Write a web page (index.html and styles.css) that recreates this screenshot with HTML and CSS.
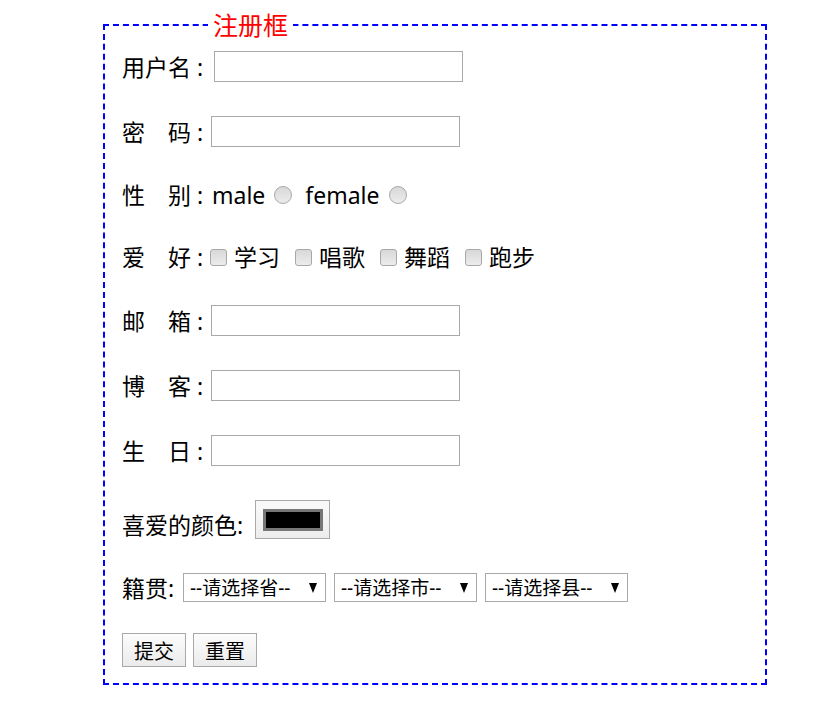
FILE: index.html
```html
<!DOCTYPE html>
<html lang="zh-CN">
<head>
<meta charset="utf-8">
<title>注册</title>
<link rel="stylesheet" href="styles.css">
</head>
<body>
<form class="form">
  <fieldset class="box">
    <legend class="legend">注册框</legend>
    <div class="row first">
      <span class="lbl lbl-wide">用户名 :</span>
      <input class="field" type="text">
    </div>
    <div class="row">
      <span class="lbl">密&emsp;码 :</span>
      <input class="field" type="password">
    </div>
    <div class="row text-row">
      <span class="lbl lbl-sex">性&emsp;别 :</span>
      <span class="opt-text">male</span>
      <input class="radio" type="radio" name="sex">
      <span class="opt-text">female</span>
      <input class="radio" type="radio" name="sex">
    </div>
    <div class="row text-row">
      <span class="lbl lbl-check">爱&emsp;好 :</span>
      <input class="check" type="checkbox"><span class="opt-text">学习</span>
      <input class="check" type="checkbox"><span class="opt-text">唱歌</span>
      <input class="check" type="checkbox"><span class="opt-text">舞蹈</span>
      <input class="check" type="checkbox"><span class="opt-text">跑步</span>
    </div>
    <div class="row">
      <span class="lbl">邮&emsp;箱 :</span>
      <input class="field" type="email">
    </div>
    <div class="row">
      <span class="lbl">博&emsp;客 :</span>
      <input class="field" type="url">
    </div>
    <div class="row">
      <span class="lbl">生&emsp;日 :</span>
      <input class="field" type="text">
    </div>
    <div class="row color-row">
      <span class="lbl lbl-color">喜爱的颜色:</span>
      <input class="color" type="color" value="#000000">
    </div>
    <div class="row place-row">
      <span class="lbl lbl-place">籍贯:</span>
      <span class="sel-wrap">
        <select class="sel"><option>--请选择省--</option></select>
      </span>
      <span class="sel-wrap">
        <select class="sel"><option>--请选择市--</option></select>
      </span>
      <span class="sel-wrap">
        <select class="sel"><option>--请选择县--</option></select>
      </span>
    </div>
    <div class="row actions">
      <button class="btn" type="submit">提交</button>
      <button class="btn" type="reset">重置</button>
    </div>
  </fieldset>
</form>
</body>
</html>
```

FILE: styles.css
```css
html, body {
  margin: 0;
  padding: 0;
  background: #fff;
}

body {
  font-family: "Noto Sans", "Noto Sans CJK SC", sans-serif;
  font-size: 23px;
  color: #000;
}

.form {
  margin: 0;
}

.box {
  margin: 12px 0 0 103px;
  width: 664px;
  box-sizing: border-box;
  border: 2px dashed #0000ff;
  padding: 0 17px 16px 17px;
  min-inline-size: 0;
}

.legend {
  margin-left: 86px;
  padding: 0 5px;
  font-size: 25px;
  line-height: 26px;
  color: #ff0000;
}

.row {
  display: flex;
  align-items: center;
  margin-top: 34px;
  height: 31px;
  white-space: nowrap;
}

.row.first {
  margin-top: 13px;
}

.text-row {
  height: 28px;
}

.color-row {
  height: 39px;
  align-items: flex-end;
}

.place-row {
  height: 29px;
}

.actions {
  height: 34px;
  margin-top: 31px;
}

.lbl {
  display: inline-block;
  width: 89px;
  line-height: 28px;
  flex: none;
}

.lbl-wide { width: 92px; }
.lbl-sex { width: 90px; }
.lbl-check { width: 88px; }
.lbl-color { width: 133px; }
.lbl-place { width: 61px; }

.field {
  width: 249px;
  height: 31px;
  box-sizing: border-box;
  margin: 0;
  padding: 0 4px;
  border: 1px solid #a9a9a9;
  border-radius: 0;
  background: #fff;
  font: inherit;
  font-size: 18px;
}

.opt-text {
  line-height: 28px;
}

.radio {
  appearance: none;
  -webkit-appearance: none;
  width: 18px;
  height: 18px;
  margin: 0 0 0 9px;
  border: 1px solid #a8a8a8;
  border-radius: 50%;
  background: linear-gradient(#d8d8d8, #ececec);
  box-sizing: border-box;
  flex: none;
}

.radio + .opt-text { margin-left: 13px; }

.check {
  appearance: none;
  -webkit-appearance: none;
  width: 17px;
  height: 17px;
  margin: 0 7px 0 0;
  border: 1px solid #a8a8a8;
  border-radius: 3px;
  background: linear-gradient(#d8d8d8, #ececec);
  box-sizing: border-box;
  flex: none;
}

.opt-text + .check { margin-left: 15px; }

.color {
  -webkit-appearance: none;
  appearance: none;
  width: 75px;
  height: 39px;
  box-sizing: border-box;
  margin: 0;
  padding: 0;
  border: 1px solid #a9a9a9;
  background: linear-gradient(#fafafa, #ececec);
  cursor: pointer;
}

.color::-webkit-color-swatch-wrapper {
  padding: 8px 6px 7px 7px;
}

.color::-webkit-color-swatch {
  border: 3px solid #777;
  border-radius: 0;
}

.sel-wrap {
  position: relative;
  display: flex;
  margin-right: 8px;
  height: 29px;
}

.sel-wrap::after {
  content: "";
  position: absolute;
  right: 9px;
  top: 10px;
  width: 0;
  height: 0;
  border-left: 4.5px solid transparent;
  border-right: 4.5px solid transparent;
  border-top: 10px solid #000;
  pointer-events: none;
}

.sel {
  appearance: none;
  -webkit-appearance: none;
  width: 143px;
  height: 29px;
  box-sizing: border-box;
  margin: 0;
  padding: 0 0 0 6px;
  border: 1px solid #a9a9a9;
  border-radius: 0;
  background: #fff;
  color: #000;
  font-family: "Noto Sans", "Noto Sans CJK SC", sans-serif;
  font-size: 19px;
}

.btn {
  width: 64px;
  height: 34px;
  box-sizing: border-box;
  margin: 0 7px 0 0;
  padding: 0;
  border: 1px solid #a9a9a9;
  border-radius: 0;
  background: linear-gradient(#fcfcfc, #ebebeb);
  color: #000;
  font-family: "Noto Sans", "Noto Sans CJK SC", sans-serif;
  font-size: 20px;
}
```
